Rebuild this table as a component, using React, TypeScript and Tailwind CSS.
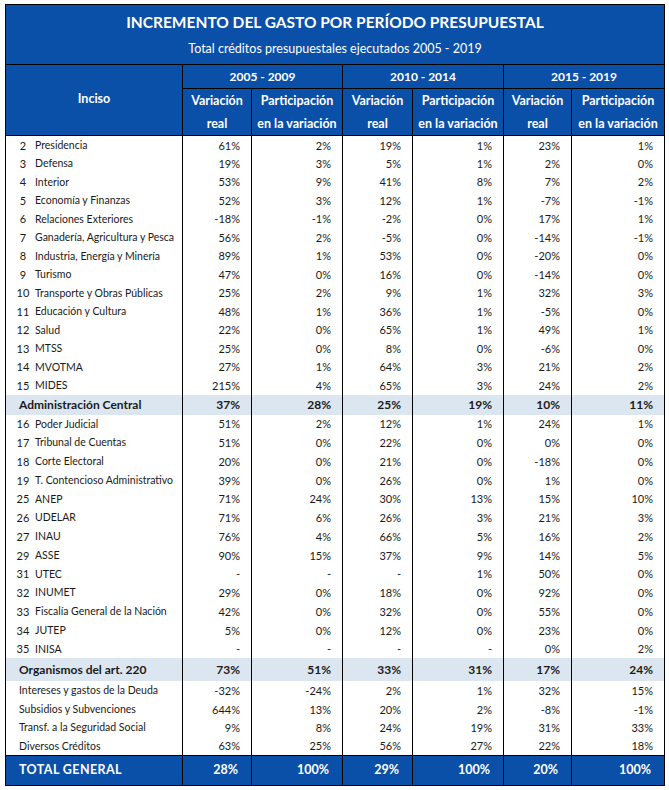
const rowsA: (string | number)[][] = [
  [2, "Presidencia", "61%", "2%", "19%", "1%", "23%", "1%"],
  [3, "Defensa", "19%", "3%", "5%", "1%", "2%", "0%"],
  [4, "Interior", "53%", "9%", "41%", "8%", "7%", "2%"],
  [5, "Economía y Finanzas", "52%", "3%", "12%", "1%", "-7%", "-1%"],
  [6, "Relaciones Exteriores", "-18%", "-1%", "-2%", "0%", "17%", "1%"],
  [7, "Ganadería, Agricultura y Pesca", "56%", "2%", "-5%", "0%", "-14%", "-1%"],
  [8, "Industria, Energía y Minería", "89%", "1%", "53%", "0%", "-20%", "0%"],
  [9, "Turismo", "47%", "0%", "16%", "0%", "-14%", "0%"],
  [10, "Transporte y Obras Públicas", "25%", "2%", "9%", "1%", "32%", "3%"],
  [11, "Educación y Cultura", "48%", "1%", "36%", "1%", "-5%", "0%"],
  [12, "Salud", "22%", "0%", "65%", "1%", "49%", "1%"],
  [13, "MTSS", "25%", "0%", "8%", "0%", "-6%", "0%"],
  [14, "MVOTMA", "27%", "1%", "64%", "3%", "21%", "2%"],
  [15, "MIDES", "215%", "4%", "65%", "3%", "24%", "2%"],
];

const rowsB: (string | number)[][] = [
  [16, "Poder Judicial", "51%", "2%", "12%", "1%", "24%", "1%"],
  [17, "Tribunal de Cuentas", "51%", "0%", "22%", "0%", "0%", "0%"],
  [18, "Corte Electoral", "20%", "0%", "21%", "0%", "-18%", "0%"],
  [19, "T. Contencioso Administrativo", "39%", "0%", "26%", "0%", "1%", "0%"],
  [25, "ANEP", "71%", "24%", "30%", "13%", "15%", "10%"],
  [26, "UDELAR", "71%", "6%", "26%", "3%", "21%", "3%"],
  [27, "INAU", "76%", "4%", "66%", "5%", "16%", "2%"],
  [29, "ASSE", "90%", "15%", "37%", "9%", "14%", "5%"],
  [31, "UTEC", "-", "-", "-", "1%", "50%", "0%"],
  [32, "INUMET", "29%", "0%", "18%", "0%", "92%", "0%"],
  [33, "Fiscalía General de la Nación", "42%", "0%", "32%", "0%", "55%", "0%"],
  [34, "JUTEP", "5%", "0%", "12%", "0%", "23%", "0%"],
  [35, "INISA", "-", "-", "-", "-", "0%", "2%"],
];

const rowsC: string[][] = [
  ["Intereses y gastos de la Deuda", "-32%", "-24%", "2%", "1%", "32%", "15%"],
  ["Subsidios y Subvenciones", "644%", "13%", "20%", "2%", "-8%", "-1%"],
  ["Transf. a la Seguridad Social", "9%", "8%", "24%", "19%", "31%", "33%"],
  ["Diversos Créditos", "63%", "25%", "56%", "27%", "22%", "18%"],
];

function Values({ vals, bold }: { vals: (string | number)[]; bold?: boolean }) {
  return (
    <>
      {vals.map((v, i) => (
        <td
          key={i}
          className={`border-l border-black text-right pr-[11px] p-0 leading-none ${bold ? "font-bold text-[12px]" : "text-[11px]"}`}
        >
          {v}
        </td>
      ))}
    </>
  );
}

function NumberedRow({ r, h }: { r: (string | number)[]; h: string }) {
  return (
    <tr className={h}>
      <td className="text-[11px] p-0 leading-none whitespace-nowrap">
        <div className="flex items-center">
          <span className="w-[16px] ml-[9px] text-center">{r[0]}</span>
          <span className="ml-[4px] text-[10.5px]">{r[1]}</span>
        </div>
      </td>
      <Values vals={r.slice(2)} />
    </tr>
  );
}

export default function App() {
  return (
    <div
      className="w-[669px] h-[790px] bg-white pl-[5px] pt-[4px] text-[#1a1a1a]"
      style={{ fontFamily: "Lato, 'Open Sans', sans-serif" }}
    >
      <table className="table-fixed border-collapse border border-black w-[659px]">
        <colgroup>
          <col className="w-[177px]" />
          <col className="w-[69px]" />
          <col className="w-[91px]" />
          <col className="w-[70px]" />
          <col className="w-[91px]" />
          <col className="w-[68px]" />
          <col className="w-[93px]" />
        </colgroup>
        <thead className="bg-[#0a4fa8] text-white">
          <tr className="h-[60px]">
            <th colSpan={7} className="align-top border-b border-black p-0">
              <div className="text-[15.5px] font-bold mt-[7px] leading-[20px]">
                INCREMENTO DEL GASTO POR PERÍODO PRESUPUESTAL
              </div>
              <div className="text-[12.5px] font-normal mt-[9px] leading-[16px]">
                Total créditos presupuestales ejecutados 2005 - 2019
              </div>
            </th>
          </tr>
          <tr className="h-[24px] text-[12px] font-bold">
            <th rowSpan={2} className="border-b border-black pb-[2px] text-[12.5px]">
              Inciso
            </th>
            <th colSpan={2} className="border-l border-b border-black">2005 - 2009</th>
            <th colSpan={2} className="border-l border-b border-black">2010 - 2014</th>
            <th colSpan={2} className="border-l border-b border-black">2015 - 2019</th>
          </tr>
          <tr className="h-[47px] text-[12.5px] font-bold leading-[23px]">
            {[0, 1, 2].flatMap((i) => [
              <th key={`v${i}`} className="border-l border-b border-black p-0">
                Variación
                <br />
                real
              </th>,
              <th key={`p${i}`} className="border-l border-b border-black whitespace-nowrap p-0">
                Participación
                <br />
                en la variación
              </th>,
            ])}
          </tr>
        </thead>
        <tbody>
          {rowsA.map((r) => (
            <NumberedRow key={r[0]} r={r} h="h-[18.5px]" />
          ))}
          <tr className="h-[20px] bg-[#dce6f1]">
            <td className="pl-[13px] p-0 leading-none font-bold text-[12px] whitespace-nowrap">
              Administración Central
            </td>
            <Values vals={["37%", "28%", "25%", "19%", "10%", "11%"]} bold />
          </tr>
          {rowsB.map((r) => (
            <NumberedRow key={r[0]} r={r} h="h-[18.75px]" />
          ))}
          <tr className="h-[23px] bg-[#dce6f1]">
            <td className="pl-[13px] p-0 leading-none font-bold text-[12px] whitespace-nowrap">
              Organismos del art. 220
            </td>
            <Values vals={["73%", "51%", "33%", "31%", "17%", "24%"]} bold />
          </tr>
          {rowsC.map((r) => (
            <tr key={r[0]} className="h-[18.5px]">
              <td className="pl-[13px] p-0 leading-none text-[10.5px] whitespace-nowrap">{r[0]}</td>
              <Values vals={r.slice(1)} />
            </tr>
          ))}
          <tr className="h-[30px] bg-[#0a4fa8] text-white border-t border-black">
            <td className="pl-[13px] p-0 leading-none font-bold text-[12.5px] tracking-[0.4px]">
              TOTAL GENERAL
            </td>
            {["28%", "100%", "29%", "100%", "20%", "100%"].map((v, i) => (
              <td
                key={i}
                className="border-l border-black text-right pr-[13px] p-0 leading-none font-bold text-[12.5px]"
              >
                {v}
              </td>
            ))}
          </tr>
        </tbody>
      </table>
    </div>
  );
}
